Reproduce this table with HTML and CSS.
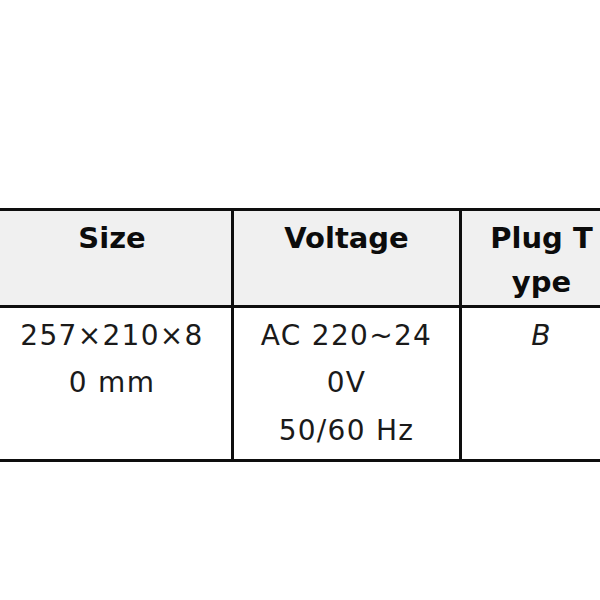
FILE: index.html
```html
<!DOCTYPE html>
<html lang="en">
<head>
<meta charset="utf-8">
<title>Specifications</title>
<link rel="stylesheet" href="styles.css">
</head>
<body>
<table class="spec">
  <colgroup>
    <col class="c-size">
    <col class="c-volt">
    <col class="c-plug">
  </colgroup>
  <thead>
    <tr>
      <th>Size</th>
      <th>Voltage</th>
      <th>Plug Type</th>
    </tr>
  </thead>
  <tbody>
    <tr>
      <td>257×210×80 mm</td>
      <td>AC 220~240V<br>50/60 Hz</td>
      <td><em>B</em></td>
    </tr>
  </tbody>
</table>
</body>
</html>
```

FILE: styles.css
```css
html, body {
  margin: 0;
  padding: 0;
  background: #ffffff;
  overflow: hidden;
}

.spec {
  margin-top: 208px;
  margin-left: -10px;
  border-collapse: collapse;
  table-layout: fixed;
  width: 634px;
  font-family: "DejaVu Sans", Verdana, sans-serif;
  word-break: break-all;
}

.c-size { width: 241px; }
.c-volt { width: 228px; }
.c-plug { width: 162px; }

.spec th,
.spec td {
  border: 3px solid #0e0e0e;
  text-align: center;
  vertical-align: top;
  padding: 0 22px;
}

.spec th {
  background: #f0f0f0;
  color: #0c0c0c;
  font-weight: bold;
  font-size: 29px;
  line-height: 44px;
  padding-top: 5px;
  padding-bottom: 1px;
}

.spec td {
  background: #ffffff;
  color: #1a1a1a;
  font-size: 28px;
  letter-spacing: 1.3px;
  line-height: 47.3px;
  padding-top: 4px;
  padding-bottom: 5px;
}

.spec em {
  font-style: italic;
}
```
